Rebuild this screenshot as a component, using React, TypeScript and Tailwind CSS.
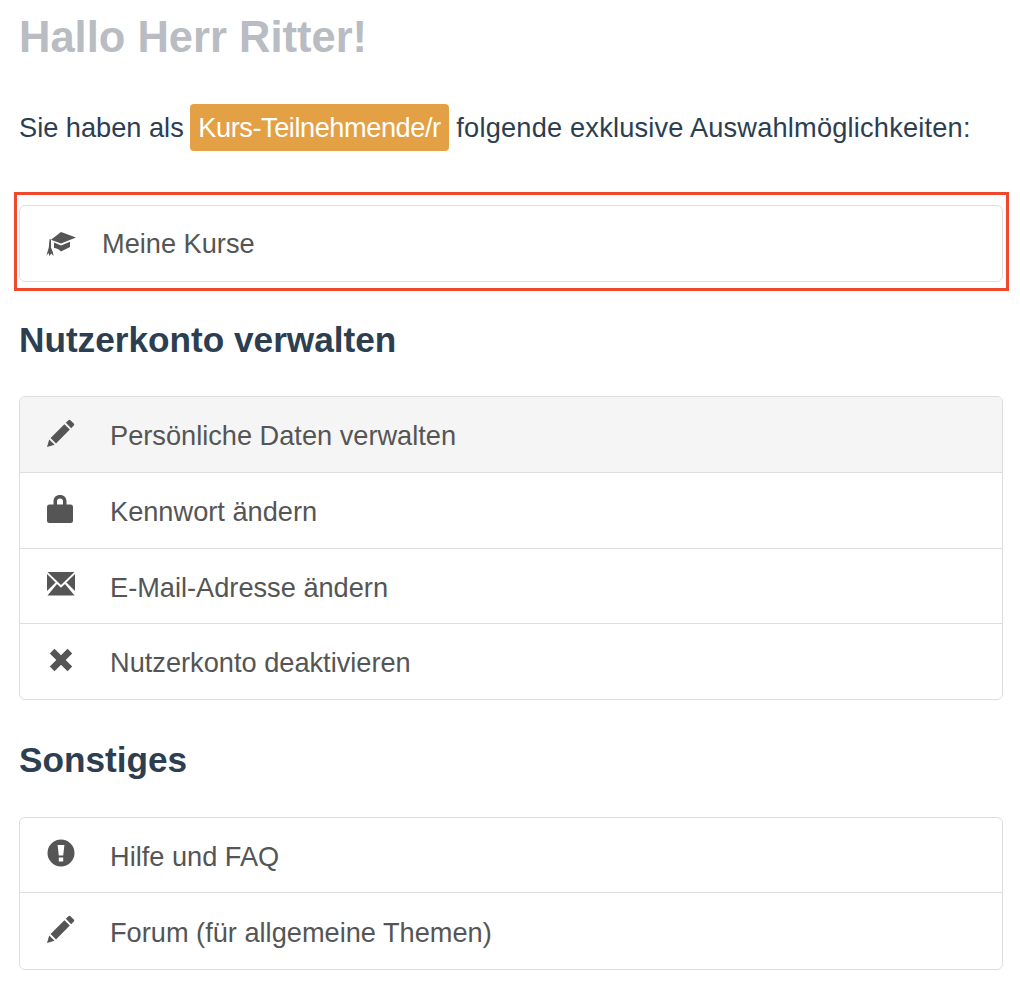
import React from 'react';

const PencilIcon = () => (
  <svg viewBox="0 0 28 28" className="w-[28px] h-[28px] fill-[#555555]">
    <path d="M0 28 L2.2 20.4 L7.6 25.8 Z" />
    <path d="M3.6 19 L17.4 5.2 L22.8 10.6 L9 24.4 Z" />
    <path d="M18.8 3.8 L21.4 1.2 Q22.4 0.2 23.4 1.2 L26.8 4.6 Q27.8 5.6 26.8 6.6 L24.2 9.2 Z" />
  </svg>
);

const LockIcon = () => (
  <svg viewBox="0 0 26 28" className="w-[26px] h-[28px] fill-[#555555]">
    <path fillRule="evenodd" d="M2.5 9.5 H6.5 V6.5 C6.5 2.5 9 0 13 0 C17 0 19.5 2.5 19.5 6.5 V9.5 H23.5 Q26 9.5 26 12 V25.5 Q26 28 23.5 28 H2.5 Q0 28 0 25.5 V12 Q0 9.5 2.5 9.5 Z M10 9.5 H16 V6.5 C16 4.6 15 3.6 13 3.6 C11 3.6 10 4.6 10 6.5 Z" />
  </svg>
);

const MailIcon = () => (
  <svg viewBox="0 0 28 24" className="w-[28px] h-[24px] fill-[#555555]">
    <path d="M0.5 0 H27.5 L14 13 Z" />
    <path d="M0 2 L8.6 10.6 L0 19 Z" />
    <path d="M28 2 L19.4 10.6 L28 19 Z" />
    <path d="M10 12 L14 15.8 L18 12 L27.5 23.5 H0.5 Z" />
  </svg>
);

const CloseIcon = () => (
  <svg viewBox="0 0 24 24" className="ml-[2px] w-[24px] h-[24px] fill-[#555555]">
    <path d="M5.5 0.8 L12 7.3 L18.5 0.8 L23.2 5.5 L16.7 12 L23.2 18.5 L18.5 23.2 L12 16.7 L5.5 23.2 L0.8 18.5 L7.3 12 L0.8 5.5 Z" />
  </svg>
);

const AlertIcon = () => (
  <svg viewBox="0 0 28 28" className="w-[28px] h-[28px] fill-[#555555]">
    <path fillRule="evenodd" d="M14 0.5 A13.5 13.5 0 1 1 14 27.5 A13.5 13.5 0 1 1 14 0.5 Z M10.6 6 L11.8 16.5 H16.2 L17.4 6 Z M11.8 18.6 V22.6 H16.2 V18.6 Z" />
  </svg>
);

const CapIcon = () => (
  <svg viewBox="0 0 30 24" className="w-[30px] h-[24px] fill-[#555555]">
    <path d="M15 0 L30 5.5 L15 11.5 L5 7.8 Z" />
    <path d="M8 10.6 L15 13.4 L24 9.8 V15 L15 19.5 C13 17.5 10.5 16 8 16 Z" />
    <path d="M3.6 7 L5 7.6 V15.4 L6.8 20 L7.6 24 L5.2 21.6 L3.4 24 L2.6 21 L0.4 23.6 L2.8 15.6 Z" />
  </svg>
);

interface RowProps {
  icon: React.ReactNode;
  label: string;
  active?: boolean;
  last?: boolean;
  height: string;
}

const Row = ({ icon, label, active, last, height }: RowProps) => (
  <div className={`flex items-center pl-[27px] ${height} ${active ? 'bg-[#f5f5f5]' : ''} ${last ? '' : 'border-b border-[#dddddd]'}`}>
    <div className="w-[63px] shrink-0 flex items-center pb-[4px]">{icon}</div>
    <span className="pt-[4px] text-[27.2px] text-[#555555]">{label}</span>
  </div>
);

export default function App() {
  return (
    <div className="w-[1020px] h-[986px] overflow-hidden bg-white font-['Liberation_Sans',Arial,sans-serif] pl-[19px] pr-[17px] pt-[10px]">
      <h1 className="text-[43.5px] leading-[54px] font-bold text-[#b9bcc2]">Hallo Herr Ritter!</h1>

      <p className="mt-[39px] h-[48px] flex items-center text-[27.2px] text-[#2c3e50] whitespace-pre">
        <span className="pt-[3px]">Sie haben als </span>
        <span className="-ml-[1px] px-[8px] pt-[3px] h-[47px] flex items-center rounded-[4px] bg-[#e3a045] text-white tracking-[-0.45px]">Kurs-Teilnehmende/r</span>
        <span className="pt-[3px] tracking-[0.2px]"> folgende exklusive Auswahlmöglichkeiten:</span>
      </p>

      <div className="mt-[41px] -ml-[5px] w-[995px] h-[99px] border-[3px] border-[#f0482c] pl-[2px] pr-[3px] pt-[10px]">
        <div className="h-[77px] border border-[#dddddd] rounded-[6px] flex items-center pl-[26px]">
          <div className="w-[56px] shrink-0"><CapIcon /></div>
          <span className="pt-[2px] text-[27.2px] text-[#555555]">Meine Kurse</span>
        </div>
      </div>

      <h2 className="mt-[27px] text-[35.2px] leading-[44px] font-bold text-[#2c3e50]">Nutzerkonto verwalten</h2>

      <div className="mt-[34px] border border-[#dddddd] rounded-[6px] overflow-hidden">
        <Row icon={<PencilIcon />} label="Persönliche Daten verwalten" active height="h-[76px]" />
        <Row icon={<LockIcon />} label="Kennwort ändern" height="h-[76px]" />
        <Row icon={<MailIcon />} label="E-Mail-Adresse ändern" height="h-[75px]" />
        <Row icon={<CloseIcon />} label="Nutzerkonto deaktivieren" last height="h-[75px]" />
      </div>

      <h2 className="mt-[38px] text-[35.2px] leading-[44px] font-bold text-[#2c3e50]">Sonstiges</h2>

      <div className="mt-[35px] border border-[#dddddd] rounded-[6px] overflow-hidden">
        <Row icon={<AlertIcon />} label="Hilfe und FAQ" height="h-[75px]" />
        <Row icon={<PencilIcon />} label="Forum (für allgemeine Themen)" last height="h-[76px]" />
      </div>
    </div>
  );
}
